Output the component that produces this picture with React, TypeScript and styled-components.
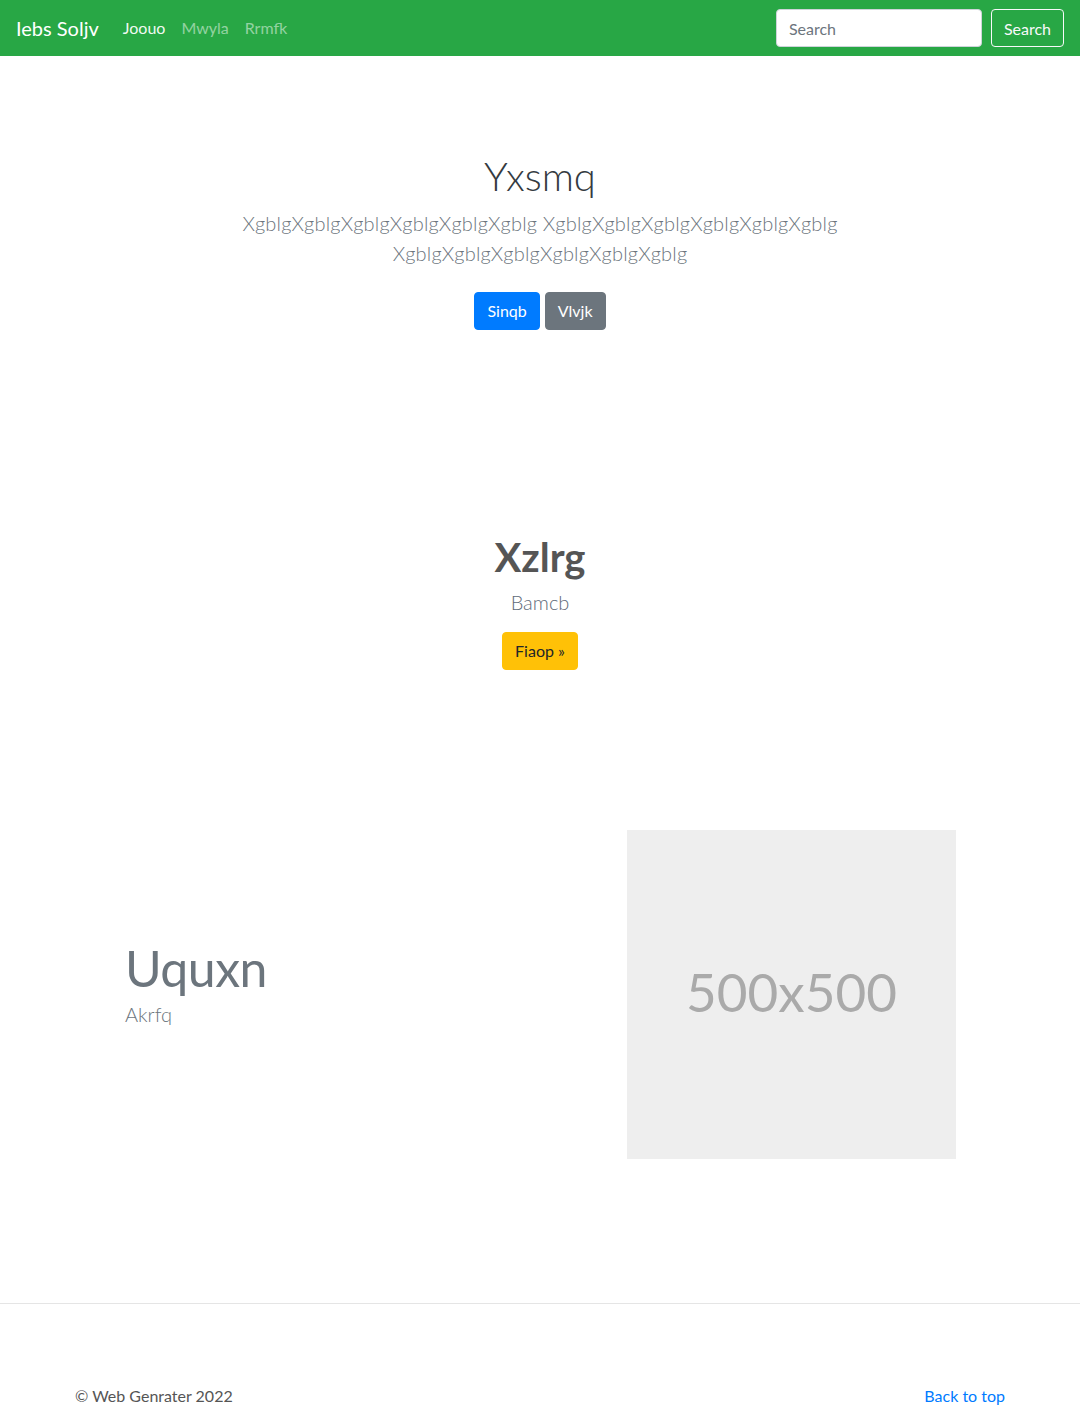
import React from "react";
import styled, { createGlobalStyle } from "styled-components";

const Global = createGlobalStyle`
  * { box-sizing: border-box; }
  html, body { margin: 0; padding: 0; background: #fff; }
  body {
    font-family: Lato, "Open Sans", "Liberation Sans", sans-serif;
    font-size: 16px;
    line-height: 1.5;
    color: #212529;
  }
`;

const Navbar = styled.nav`
  height: 56px;
  background: #28a745;
  display: flex;
  align-items: center;
  padding: 0 16px;
`;

const Brand = styled.a`
  font-size: 20px;
  line-height: 30px;
  color: #fff;
  text-decoration: none;
  margin-right: 16px;
`;

const NavList = styled.ul`
  display: flex;
  list-style: none;
  margin: 0;
  padding: 0;
  flex: 1;
`;

const NavLink = styled.a<{ $active?: boolean }>`
  display: block;
  padding: 8px;
  font-size: 16px;
  color: ${(p) => (p.$active ? "rgba(255,255,255,0.95)" : "rgba(255,255,255,0.5)")};
  text-decoration: none;
`;

const SearchForm = styled.form`
  display: flex;
  align-items: center;
  gap: 9px;
`;

const SearchInput = styled.input`
  width: 206px;
  height: 38px;
  padding: 6px 12px;
  font-family: inherit;
  font-size: 16px;
  color: #495057;
  border: 1px solid #ced4da;
  border-radius: 4px;
  background: #fff;
  &::placeholder { color: #6c757d; }
`;

const OutlineButton = styled.button`
  height: 38px;
  padding: 6px 12px;
  font-family: inherit;
  font-size: 16px;
  color: #f8f9fa;
  background: transparent;
  border: 1px solid #f8f9fa;
  border-radius: 4px;
`;

const Hero = styled.section`
  padding-top: 96px;
  text-align: center;
`;

const HeroInner = styled.div`
  max-width: 620px;
  margin: 0 auto;
`;

const HeroTitle = styled.h1`
  margin: 0 0 8px;
  font-size: 40px;
  line-height: 48px;
  font-weight: 300;
  color: #343a40;
`;

const Lead = styled.p`
  margin: 0 0 24px;
  font-size: 20px;
  line-height: 30px;
  font-weight: 300;
  letter-spacing: 0.01em;
  color: #6c757d;
`;

const ButtonRow = styled.div`
  display: flex;
  justify-content: center;
  gap: 5px;
`;

const Btn = styled.a<{ $bg: string; $fg: string }>`
  display: inline-block;
  height: 38px;
  padding: 6px 12px;
  font-size: 16px;
  line-height: 24px;
  border: 1px solid ${(p) => p.$bg};
  border-radius: 4px;
  background: ${(p) => p.$bg};
  color: ${(p) => p.$fg};
  text-decoration: none;
`;

const Feature = styled.section`
  margin-top: 203px;
  text-align: center;
  display: flex;
  flex-direction: column;
  align-items: center;
`;

const FeatureTitle = styled.h2`
  margin: 0 0 6px;
  font-size: 40px;
  line-height: 48px;
  font-weight: 700;
  color: #555;
`;

const FeatureText = styled.p`
  margin: 0 0 15px;
  font-size: 20px;
  line-height: 30px;
  font-weight: 300;
  color: #5f6b7a;
`;

const Featurette = styled.section`
  margin: 160px auto 0;
  max-width: 930px;
  display: grid;
  grid-template-columns: 1fr 329px;
  align-items: center;
  padding: 0 49px 0 50px;
`;

const FeaturetteText = styled.div`
  padding-bottom: 18px;
`;

const FeaturetteHeading = styled.h2`
  margin: 0 0 6px;
  font-size: 50px;
  line-height: 1;
  font-weight: 400;
  letter-spacing: -0.5px;
  color: #6c757d;
`;

const FeaturetteSub = styled.p`
  margin: 0;
  font-size: 20px;
  line-height: 30px;
  font-weight: 300;
  color: #6c757d;
`;

const Placeholder = styled.div`
  width: 329px;
  height: 329px;
  padding-bottom: 6px;
  background: #eee;
  color: #aaa;
  font-size: 53px;
  display: flex;
  align-items: center;
  justify-content: center;
`;

const Footer = styled.footer`
  margin-top: 144px;
  border-top: 1px solid #e5e5e5;
  padding-top: 80px;
`;

const FooterInner = styled.div`
  max-width: 930px;
  margin: 0 auto;
  display: flex;
  justify-content: space-between;
  font-size: 16px;
  line-height: 24px;
  color: #6c757d;
`;

const FooterText = styled.p`
  margin: 0;
  color: #555;
`;

const TopLink = styled.a`
  color: #007bff;
  text-decoration: none;
`;

export default function App() {
  const chunk = "Xgblg".repeat(6);
  return (
    <>
      <Global />
      <Navbar>
        <Brand href="#">Iebs Soljv</Brand>
        <NavList>
          <li><NavLink href="#" $active>Joouo</NavLink></li>
          <li><NavLink href="#">Mwyla</NavLink></li>
          <li><NavLink href="#">Rrmfk</NavLink></li>
        </NavList>
        <SearchForm onSubmit={(e) => e.preventDefault()}>
          <SearchInput placeholder="Search" />
          <OutlineButton type="submit">Search</OutlineButton>
        </SearchForm>
      </Navbar>

      <Hero>
        <HeroInner>
          <HeroTitle>Yxsmq</HeroTitle>
          <Lead>
            {chunk} {chunk} {chunk}
          </Lead>
          <ButtonRow>
            <Btn href="#" $bg="#007bff" $fg="#fff">Sinqb</Btn>
            <Btn href="#" $bg="#6c757d" $fg="#fff">Vlvjk</Btn>
          </ButtonRow>
        </HeroInner>
      </Hero>

      <Feature>
        <FeatureTitle>Xzlrg</FeatureTitle>
        <FeatureText>Bamcb</FeatureText>
        <Btn href="#" $bg="#ffc107" $fg="#212529">Fiaop »</Btn>
      </Feature>

      <Featurette>
        <FeaturetteText>
          <FeaturetteHeading>Uquxn</FeaturetteHeading>
          <FeaturetteSub>Akrfq</FeaturetteSub>
        </FeaturetteText>
        <Placeholder>500x500</Placeholder>
      </Featurette>

      <Footer>
        <FooterInner>
          <FooterText>© Web Genrater 2022</FooterText>
          <TopLink href="#">Back to top</TopLink>
        </FooterInner>
      </Footer>
    </>
  );
}
